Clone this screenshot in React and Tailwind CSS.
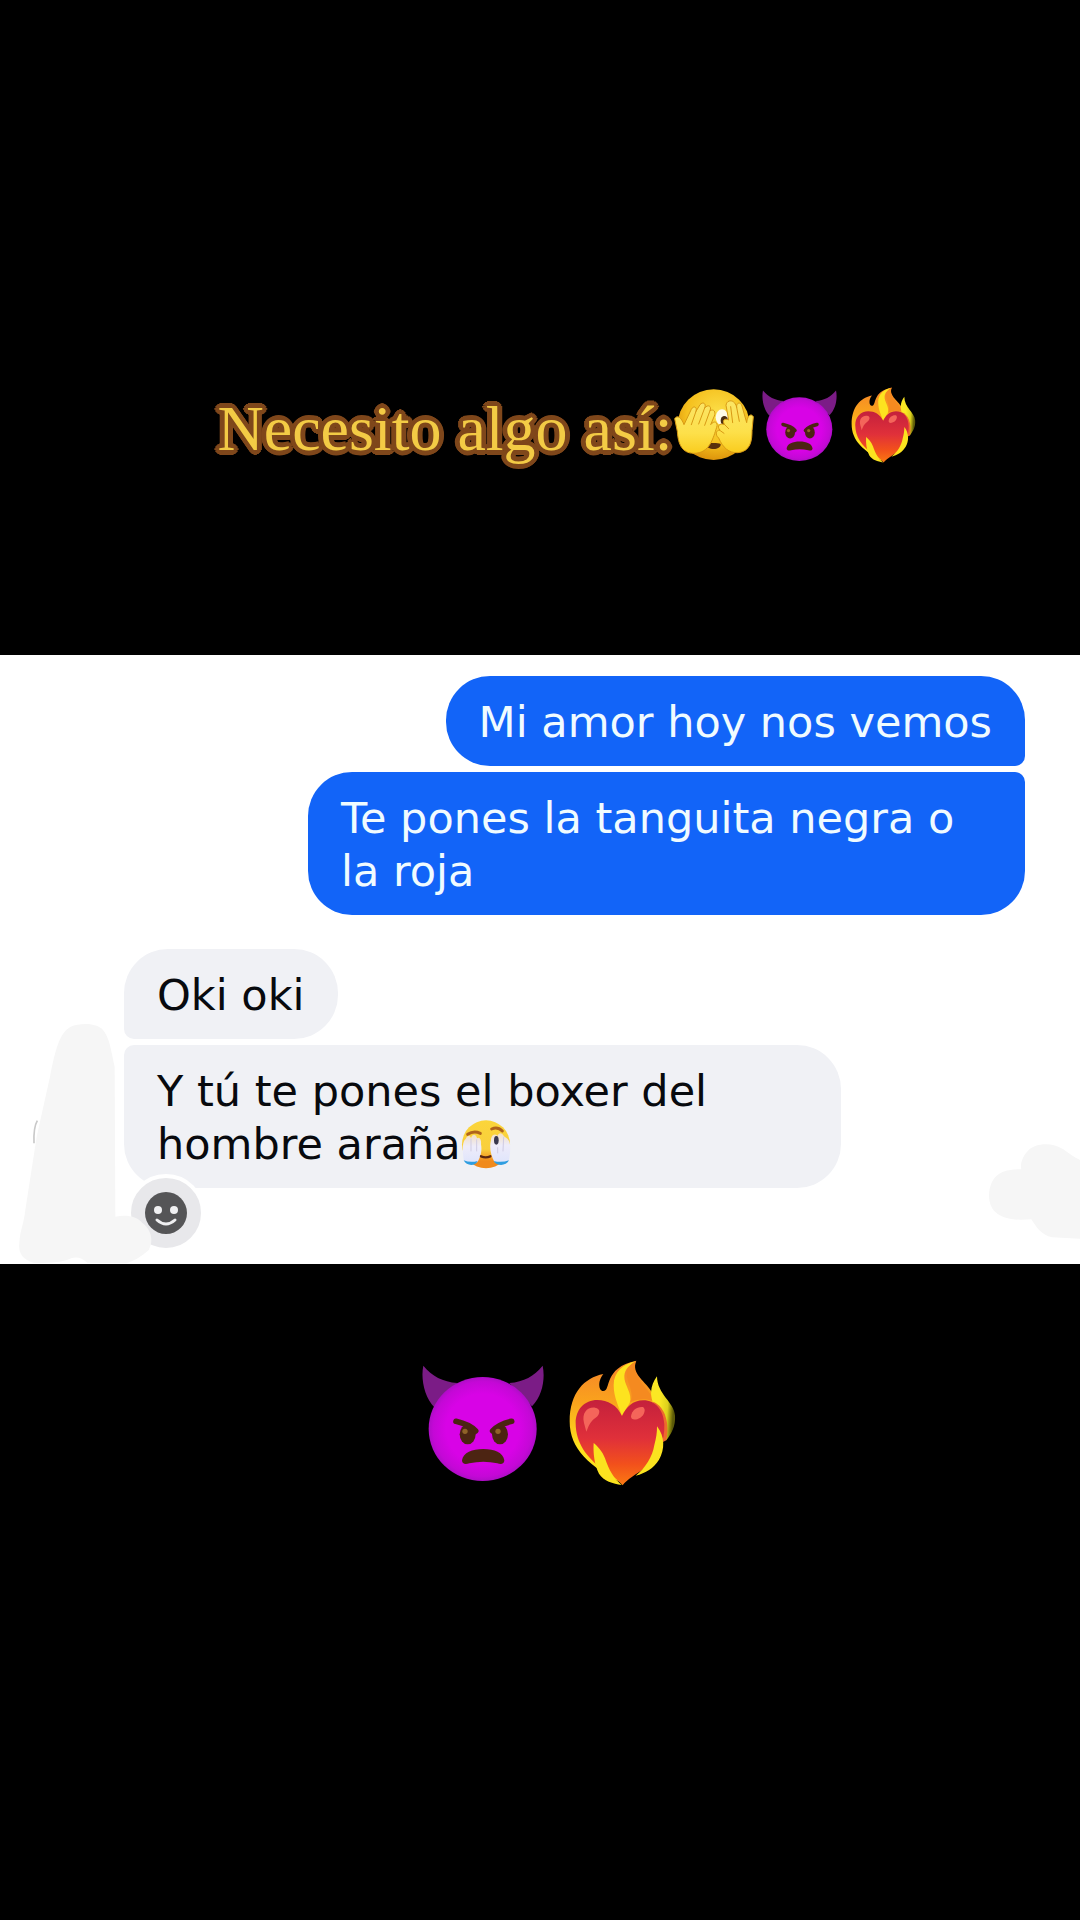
import React from "react";
import clsx from "clsx";

const messages = [
  { id: 1, mine: true, first: true, text: "Mi amor hoy nos vemos" },
  { id: 2, mine: true, first: false, text: "Te pones la tanguita negra o la roja" },
  { id: 3, mine: false, first: true, text: "Oki oki" },
  {
    id: 4,
    mine: false,
    first: false,
    text: "Y tú te pones el boxer del hombre araña",
    emoji: true,
  },
];

function DevilEmoji({ className }) {
  return (
    <svg viewBox="66 72 366 348" className={className} role="img" aria-label="Diablo enojado">
      <defs>
        <radialGradient id="devilFace" cx="0.5" cy="0.5" r="0.52">
          <stop offset="0.65" stopColor="#d803e6" />
          <stop offset="0.88" stopColor="#c408d6" />
          <stop offset="1" stopColor="#a40fc0" />
        </radialGradient>
      </defs>
      <path d="M70 74C96 106 128 122 172 126L104 200C72 168 62 112 70 74Z" fill="#7b1c86" />
      <path d="M428 74C402 106 372 122 328 126L396 196C428 164 436 112 428 74Z" fill="#7b1c86" />
      <ellipse cx="248" cy="264" rx="162" ry="156" fill="url(#devilFace)" />
      <ellipse cx="203" cy="280" rx="24" ry="30" fill="#4c2412" />
      <ellipse cx="300" cy="280" rx="24" ry="30" fill="#4c2412" />
      <path d="M168 241C190 246 214 256 227 270" stroke="#4c2412" strokeWidth="17" strokeLinecap="round" fill="none" />
      <path d="M335 241C313 246 291 256 278 270" stroke="#4c2412" strokeWidth="17" strokeLinecap="round" fill="none" />
      <circle cx="195" cy="271" r="8" fill="#8f6228" />
      <circle cx="294" cy="271" r="8" fill="#8f6228" />
      <path
        d="M186 358C190 334 216 324 250 324C284 324 309 334 313 358C313 370 302 371 292 367C264 361 236 361 208 367C197 371 186 370 186 358Z"
        fill="#4c2412"
      />
    </svg>
  );
}

function FireHeartEmoji({ className }) {
  return (
    <svg viewBox="58 61 321 378" className={className} role="img" aria-label="Corazón en llamas">
      <defs>
        <linearGradient id="flame" x1="0" y1="0" x2="0" y2="1">
          <stop offset="0" stopColor="#f5822a" />
          <stop offset="0.35" stopColor="#faa41c" />
          <stop offset="0.7" stopColor="#fde21e" />
        </linearGradient>
        <linearGradient id="heart" x1="0" y1="0" x2="0" y2="1">
          <stop offset="0" stopColor="#c4203c" />
          <stop offset="0.45" stopColor="#e0303a" />
          <stop offset="0.75" stopColor="#f2501c" />
          <stop offset="1" stopColor="#fb7a12" />
        </linearGradient>
        <linearGradient id="sideFlame" x1="0" y1="0" x2="1" y2="0.2">
          <stop offset="0.4" stopColor="#fbe824" />
          <stop offset="0.75" stopColor="#dcd01c" />
          <stop offset="1" stopColor="#5c5a08" />
        </linearGradient>
      </defs>
      <path
        d="M161 103C142 126 148 154 160 154C186 156 158 84 260 63C242 102 290 126 308 160C330 200 350 260 330 320L220 432C120 380 60 330 60 245C60 160 104 114 161 103Z"
        fill="url(#flame)"
      />
      <path d="M258 65C220 72 192 98 192 136C192 176 208 200 216 228L240 190C250 160 222 136 224 108C226 88 240 76 258 65Z" fill="#fde31f" />
      <path d="M258 65C232 82 226 96 236 126C244 150 250 170 242 188C262 178 290 176 308 184C312 150 240 120 258 65Z" fill="#f58a20" />
      <path d="M322 110C300 140 300 170 314 198L350 302C366 280 378 260 376 228C374 188 322 164 322 110Z" fill="url(#sideFlame)" />
      <path d="M310 186C338 196 362 236 350 302L334 310Z" fill="#ee6a2c" />
      <path
        d="M217 229C202 196 174 181 143 181C104 181 78 210 78 250C78 310 112 354 156 386C182 404 202 418 219 437C232 418 260 404 286 384C326 352 346 306 344 254C342 212 318 182 281 182C250 182 230 202 217 229Z"
        fill="url(#heart)"
      />
      <path d="M103 250C96 220 112 202 136 204C154 206 152 224 138 234C120 246 116 262 110 276Z" fill="#f4655a" />
      <path d="M244 230C246 212 262 200 280 202C290 208 284 226 272 234C258 242 244 242 244 230Z" fill="#f4655a" />
      <path d="M132 310C130 340 134 376 148 402C162 424 190 432 216 436C192 416 178 392 166 356C158 334 144 320 132 310Z" fill="#fbe31f" />
      <path d="M322 260C346 290 346 330 328 360C312 386 288 400 258 408C288 384 308 352 314 316C320 294 322 280 322 260Z" fill="#fbe31f" />
    </svg>
  );
}

function PeekingEmoji({ className }) {
  return (
    <svg viewBox="522 57 240 216" className={className} role="img" aria-label="Cara espiando entre las manos">
      <defs>
        <radialGradient id="peekFace" cx="0.55" cy="0.35" r="0.65">
          <stop offset="0" stopColor="#fce04a" />
          <stop offset="0.65" stopColor="#f5c01e" />
          <stop offset="1" stopColor="#dd940c" />
        </radialGradient>
        <linearGradient id="peekHand" x1="0" y1="0" x2="0" y2="1">
          <stop offset="0" stopColor="#fbe566" />
          <stop offset="0.6" stopColor="#fde04a" />
          <stop offset="1" stopColor="#f9cc1e" />
        </linearGradient>
      </defs>
      <ellipse cx="641" cy="164" rx="108" ry="106" fill="url(#peekFace)" />
      <ellipse cx="666" cy="142" rx="19" ry="24" fill="#fffbe8" />
      <ellipse cx="673" cy="152" rx="11" ry="14" fill="#4a2c10" />
      <path d="M618 222C628 218 654 218 662 222C664 242 618 242 618 222Z" fill="#5a300c" />
      <path
        d="M524 146C532 134 544 142 552 164L574 118C580 106 592 110 588 124L600 104C608 94 620 100 614 114C624 102 636 108 630 122C642 116 648 126 643 138L632 164C642 150 656 156 650 172C640 202 630 250 582 250C540 250 534 212 532 184Z"
        fill="url(#peekHand)"
        stroke="#d99a14"
        strokeWidth="3"
        strokeLinejoin="round"
      />
      <path d="M588 124L574 164M614 114L596 162M630 122L614 166" stroke="#d99a14" strokeWidth="3" strokeLinecap="round" fill="none" />
      <path
        d="M760 140C752 128 742 138 740 158L726 108C722 94 708 98 710 112C704 86 680 88 678 106L686 150C676 144 664 150 674 164C660 158 648 168 660 180C648 180 644 194 656 204C668 232 686 250 714 248C752 244 756 212 756 182Z"
        fill="url(#peekHand)"
        stroke="#d99a14"
        strokeWidth="3"
        strokeLinejoin="round"
      />
      <path d="M710 112L718 154M692 110L698 158M674 164L686 176M658 180L672 190" stroke="#d99a14" strokeWidth="3" strokeLinecap="round" fill="none" />
    </svg>
  );
}

function ShyEmoji({ className }) {
  return (
    <svg viewBox="118 84 150 150" className={className} role="img" aria-label="Cara con manos">
      <defs>
        <linearGradient id="shyFace" x1="0" y1="0" x2="0" y2="1">
          <stop offset="0" stopColor="#fbd53a" />
          <stop offset="0.6" stopColor="#f9cf3c" />
          <stop offset="0.85" stopColor="#f08a1c" />
        </linearGradient>
        <linearGradient id="shyHand" x1="0" y1="0" x2="0" y2="1">
          <stop offset="0" stopColor="#f3e0c4" />
          <stop offset="0.4" stopColor="#eeecfa" />
          <stop offset="0.85" stopColor="#e2e6fb" />
        </linearGradient>
      </defs>
      <circle cx="193" cy="160" r="72" fill="url(#shyFace)" />
      <path d="M126 206C122 176 122 150 132 144C138 130 146 132 148 142C152 126 164 130 166 142C174 136 180 148 178 160C182 180 176 200 168 212C158 222 134 220 126 206Z" fill="url(#shyHand)" />
      <path d="M262 206C266 184 268 162 262 150C256 138 250 140 246 134C238 122 230 126 228 134C216 124 208 136 208 148C202 168 208 196 218 212C230 222 254 220 262 206Z" fill="url(#shyHand)" />
      <path d="M138 130Q156 118 176 127" stroke="#b0641c" strokeWidth="9" strokeLinecap="round" fill="none" />
      <path d="M210 114Q228 106 242 120" stroke="#b0641c" strokeWidth="9" strokeLinecap="round" fill="none" />
      <path d="M178 196Q192 202 206 196" stroke="#5b2711" strokeWidth="7" strokeLinecap="round" fill="none" />
      <path d="M148 144V180M165 146V180M228 170V186M246 138L244 180" stroke="#cfcbe2" strokeWidth="3" strokeLinecap="round" />
      <ellipse cx="224" cy="148" rx="7" ry="13" fill="#39384e" />
      <path d="M126 208Q146 216 168 210C162 226 134 226 126 208Z" fill="#2f9ee0" />
      <path d="M262 208Q240 216 216 210C224 226 254 226 262 208Z" fill="#2f9ee0" />
    </svg>
  );
}

function Bubble({ message }) {
  const { mine, first, text, emoji } = message;
  return (
    <li
      className={clsx(
        "max-w-[717px] px-[33px] pt-5 pb-[17px] rounded-[44px] text-[43px] leading-[53px]",
        mine ? "self-end bg-[#1264f8] text-[#f0fbff]" : "self-start bg-[#f0f1f5] text-[#080a0e]",
        mine && first && "rounded-br-[10px]",
        mine && !first && "rounded-tr-[10px]",
        !mine && first && "mt-7 rounded-bl-[10px]",
        !mine && !first && "rounded-tl-[10px]"
      )}
    >
      {text}
      {emoji && <ShyEmoji className="inline-block size-[50px] align-middle -mt-3 -mb-1" />}
    </li>
  );
}

export default function App() {
  return (
    <main className="min-h-screen bg-black">
      <header className="flex items-center justify-center pt-[381px] pb-[186px] pl-[54px]">
        <h1 className="pt-2 text-[64px] leading-[80px] font-['Liberation_Serif',serif] text-[#f3cb45] [text-shadow:5px_0_#7f471b,4px_2px_#7f471b,3px_3px_#7f471b,2px_4px_#7f471b,0_5px_#7f471b,-2px_4px_#7f471b,-3px_3px_#7f471b,-4px_2px_#7f471b,-5px_0_#7f471b,-4px_-2px_#7f471b,-3px_-3px_#7f471b,-2px_-4px_#7f471b,0_-5px_#7f471b,2px_-4px_#7f471b,3px_-3px_#7f471b,4px_-2px_#7f471b]">
          Necesito algo así:
        </h1>
        <PeekingEmoji className="w-20 h-[72px] ml-[2px]" />
        <DevilEmoji className="w-[75px] h-[71px] ml-2" />
        <FireHeartEmoji className="w-[65px] h-[76px] ml-[14px]" />
      </header>

      <section className="relative bg-white pt-[21px] pb-[76px] pr-[55px] pl-[124px] font-['DejaVu_Sans',sans-serif]">
        <ul className="flex flex-col gap-[6px]">
          {messages.map((message) => (
            <Bubble key={message.id} message={message} />
          ))}
        </ul>

        <button
          type="button"
          aria-label="Reaccionar"
          className="absolute left-[127px] bottom-3 size-[78px] rounded-full border-4 border-white bg-[#e8e8eb] flex items-center justify-center"
        >
          <svg viewBox="0 0 42 42" className="size-[42px]">
            <circle cx="21" cy="21" r="21" fill="#555557" />
            <circle cx="13" cy="18" r="4" fill="#f0f0f2" />
            <circle cx="29" cy="18" r="4" fill="#f0f0f2" />
            <path d="M12 28Q21 36 30 28" stroke="#f0f0f2" strokeWidth="3" strokeLinecap="round" fill="none" />
          </svg>
        </button>

        {/* erased avatar and stickers */}
        <svg viewBox="0 0 480 762" className="absolute left-0 bottom-0 w-40 h-[254px] pointer-events-none" aria-hidden="true">
          <path d="M112 332Q100 352 102 400" stroke="#c9c9c9" strokeWidth="5" fill="none" />
          <path
            d="M212 50C240 38 285 38 306 56C330 80 334 130 344 170L346 620C380 614 410 618 428 640C450 656 464 690 446 720C420 744 400 752 380 760L262 758Q240 738 216 744Q180 762 100 758C70 750 54 730 58 700C60 660 72 640 76 600L110 380L150 200C164 130 176 70 212 50Z"
            fill="#f6f6f6"
          />
        </svg>
        <svg viewBox="60 60 300 372" className="absolute right-0 bottom-0 w-[100px] h-[124px] pointer-events-none" aria-hidden="true">
          <path
            d="M360 120C340 112 325 98 310 88C280 68 230 66 204 92C188 108 180 130 184 148C150 146 110 154 96 186C82 216 84 256 106 276C134 302 176 300 214 298C228 320 244 346 276 352L360 356Z"
            fill="#f6f6f6"
          />
        </svg>
      </section>

      <footer className="flex items-center justify-center pt-24 pb-24 pl-[18px]">
        <DevilEmoji className="w-[122px] h-[116px]" />
        <FireHeartEmoji className="w-[107px] h-[126px] ml-[25px]" />
      </footer>
    </main>
  );
}
